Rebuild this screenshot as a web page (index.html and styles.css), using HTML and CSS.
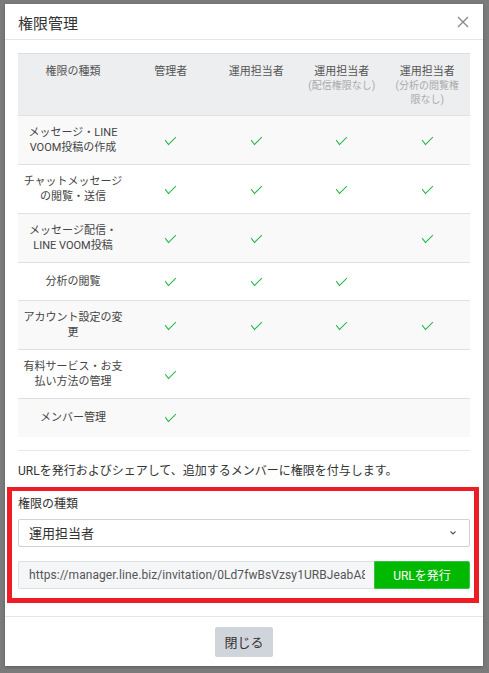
FILE: index.html
```
<!DOCTYPE html>
<html lang="ja">
<head>
<meta charset="utf-8">
<title>権限管理</title>
<link rel="stylesheet" href="styles.css">
</head>
<body>
<div class="modal">
  <div class="modal-header">
    <h1 class="modal-title">権限管理</h1>
    <button class="close-x" aria-label="閉じる">
      <svg width="12" height="12" viewBox="0 0 12 12"><path d="M1 1L11 11M11 1L1 11" stroke="#8a8a8a" stroke-width="1.4" fill="none"/></svg>
    </button>
  </div>
  <div class="modal-body">
    <table class="perm">
      <colgroup><col class="c1"><col class="cn"><col class="cn"><col class="cn"><col class="cn"></colgroup>
      <thead>
        <tr>
          <th>権限の種類</th>
          <th>管理者</th>
          <th>運用担当者</th>
          <th>運用担当者<span class="sub">(配信権限なし)</span></th>
          <th>運用担当者<span class="sub">(分析の閲覧権限なし)</span></th>
        </tr>
      </thead>
      <tbody>
        <tr><td>メッセージ・LINE VOOM投稿の作成</td><td><i class="ck"></i></td><td><i class="ck"></i></td><td><i class="ck"></i></td><td><i class="ck"></i></td></tr>
        <tr><td>チャットメッセージの閲覧・送信</td><td><i class="ck"></i></td><td><i class="ck"></i></td><td><i class="ck"></i></td><td><i class="ck"></i></td></tr>
        <tr><td>メッセージ配信・<br>LINE VOOM投稿</td><td><i class="ck"></i></td><td><i class="ck"></i></td><td></td><td><i class="ck"></i></td></tr>
        <tr><td>分析の閲覧</td><td><i class="ck"></i></td><td><i class="ck"></i></td><td><i class="ck"></i></td><td></td></tr>
        <tr><td>アカウント設定の変更</td><td><i class="ck"></i></td><td><i class="ck"></i></td><td><i class="ck"></i></td><td><i class="ck"></i></td></tr>
        <tr><td>有料サービス・お支払い方法の管理</td><td><i class="ck"></i></td><td></td><td></td><td></td></tr>
        <tr><td>メンバー管理</td><td><i class="ck"></i></td><td></td><td></td><td></td></tr>
      </tbody>
    </table>
    <hr class="sep">
    <p class="desc">URLを発行およびシェアして、追加するメンバーに権限を付与します。</p>
    <section class="issue">
      <div class="label">権限の種類</div>
      <div class="select">
        <span>運用担当者</span>
        <svg class="chev" width="6" height="4" viewBox="0 0 6 4"><path d="M0.5 0.5L3 3L5.5 0.5" stroke="#555" stroke-width="1.1" fill="none"/></svg>
      </div>
      <div class="url-row">
        <div class="url"><span class="url-text">https://manager.line.biz/invitation/0Ld7fwBsVzsy1URBJeabA8sQ</span></div>
        <button class="issue-btn">URLを発行</button>
      </div>
    </section>
  </div>
  <div class="modal-footer">
    <button class="close-btn">閉じる</button>
  </div>
</div>
</body>
</html>
```
FILE: styles.css
```
* { box-sizing: border-box; }
html, body { margin: 0; padding: 0; }
body {
  background: #7b7b7b;
  font-family: Roboto, "Noto Sans CJK JP", sans-serif;
  color: #333;
  height: 673px;
  overflow: hidden;
  padding-top: 4px;
  padding-left: 5px;
}
.modal {
  width: 478px;
  height: 662px;
  background: #fff;
  box-shadow: 0 1px 3px rgba(0,0,0,0.25);
  display: flex;
  flex-direction: column;
}
.modal-header {
  flex-shrink: 0;
  height: 36px;
  border-bottom: 1px solid #e6e6e6;
  display: flex;
  align-items: center;
  justify-content: space-between;
  padding: 1px 14px 0 13px;
}
.modal-title {
  margin: 0;
  font-size: 15px;
  font-weight: 400;
  color: #333;
}
.close-x {
  border: 0; background: none; padding: 0;
  width: 12px; height: 12px;
  display: flex;
}
.modal-body {
  flex-shrink: 0;
  padding: 13px 13px 0;
}
.perm {
  width: 452px;
  border-collapse: collapse;
  table-layout: fixed;
  font-size: 11px;
}
.perm col.c1 { width: 110px; }
.perm col.cn { width: 85.5px; }
.perm th {
  background: #edeef0;
  border-top: 1px solid #dcdde0;
  color: #555;
  font-weight: 400;
  height: 62px;
  vertical-align: top;
  padding: 11px 7px 0;
  line-height: 14px;
  text-align: center;
}
.perm th .sub {
  display: block;
  color: #ababab;
  font-size: 10px;
}
.perm td {
  border-top: 1px solid #e0e0e0;
  text-align: center;
  vertical-align: middle;
  color: #444;
  line-height: 15px;
  padding: 9px 4px;
  height: 38px;
}
.perm tbody tr:nth-child(odd) td { background: #f9f9f9; }
.perm tbody tr:nth-child(even) td { background: #fff; }
.ck {
  display: inline-block;
  width: 11px;
  height: 6px;
  border-left: 1.6px solid #18b43c;
  border-bottom: 1.6px solid #18b43c;
  transform: rotate(-45deg) skewX(-8deg);
  margin-top: -4px;
  vertical-align: middle;
}
.sep {
  border: 0;
  border-top: 1px solid #e6e6e6;
  margin: 13px 0 0;
}
.desc {
  margin: 11px 0 0;
  font-size: 12px;
  line-height: 18px;
  color: #333;
}
.issue {
  margin: 7px -9px 0 -11px;
  border: 5px solid #ee1d25;
  border-top-width: 4px;
  padding: 5px 4px 9px 6px;
}
.label {
  font-size: 12px;
  line-height: 16px;
  color: #333;
}
.select {
  margin-top: 7px;
  height: 28px;
  border: 1px solid #cfd2d6;
  border-radius: 2px;
  display: flex;
  align-items: center;
  justify-content: space-between;
  padding: 0 13px 0 10px;
  font-size: 13px;
  color: #333;
}
.chev { display: block; }
.url-row {
  margin-top: 14px;
  height: 28px;
  display: flex;
}
.url {
  flex: 1;
  min-width: 0;
  background: #f5f6f8;
  border: 1px solid #dcdfe3;
  border-right: 0;
  border-radius: 2px 0 0 2px;
  padding: 0 9px 0 10px;
  font-size: 12px;
  line-height: 26px;
  color: #555;
}
.url-text {
  display: block;
  white-space: nowrap;
  overflow: hidden;
  letter-spacing: 0.08px;
}
.issue-btn {
  width: 96px;
  border: 1px solid #36c24a;
  background: #00b900;
  color: #fff;
  font-family: inherit;
  font-size: 12px;
  padding: 0;
  border-radius: 0 2px 2px 0;
}
.modal-footer {
  flex-shrink: 0;
  margin-top: 13px;
  border-top: 1px solid #e8e8e8;
  padding: 10px 0 9px;
  display: flex;
  justify-content: center;
}
.close-btn {
  width: 58px;
  height: 30px;
  border: 0;
  border-radius: 2px;
  background: #d0d4db;
  color: #333;
  font-family: inherit;
  font-size: 13px;
  padding: 0;
}
```
